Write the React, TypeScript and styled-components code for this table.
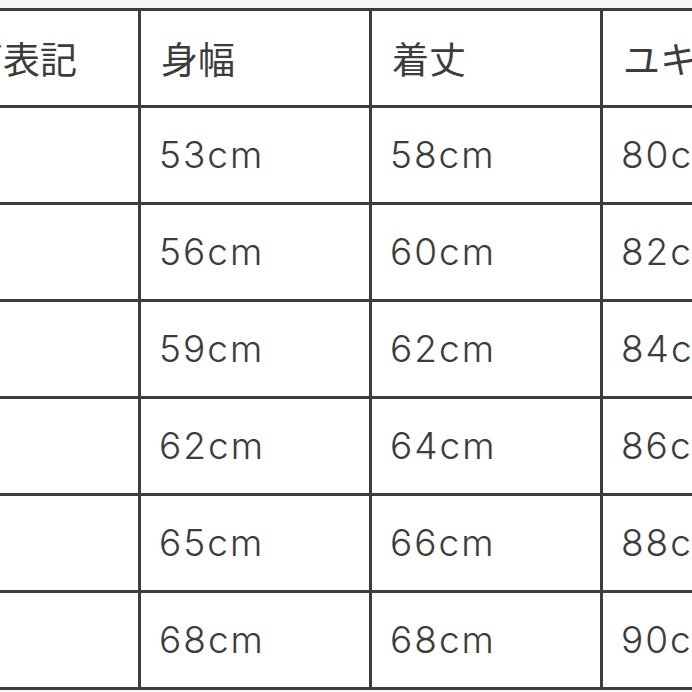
import styled, { createGlobalStyle } from 'styled-components'

const GlobalStyle = createGlobalStyle`
  html, body {
    margin: 0;
    padding: 0;
    width: 692px;
    height: 692px;
    overflow: hidden;
    background: #f6f6f6;
  }
`

const Table = styled.div`
  display: grid;
  grid-template-columns: 265px repeat(3, 228px);
  grid-auto-rows: 94px;
  gap: 3px;
  padding: 3px;
  width: max-content;
  margin: 8px 0 0 -130px;
  background: #3d3d3d;
  font-family: Inter, 'Noto Sans CJK JP', sans-serif;
  color: #3c3c3c;
`

const Cell = styled.div<{ $head?: boolean }>`
  display: flex;
  align-items: center;
  padding: ${p => (p.$head ? '0 0 0 20px' : '0 0 2px 18px')};
  background: #fff;
  white-space: nowrap;
  overflow: hidden;
  font-size: 37px;
  font-weight: ${p => (p.$head ? 400 : 300)};
  letter-spacing: ${p => (p.$head ? '0' : '2px')};
`

const header = ['サイズ表記', '身幅', '着丈', 'ユキ丈']

const rows = [
  ['S', '53cm', '58cm', '80cm'],
  ['M', '56cm', '60cm', '82cm'],
  ['L', '59cm', '62cm', '84cm'],
  ['XL', '62cm', '64cm', '86cm'],
  ['2XL', '65cm', '66cm', '88cm'],
  ['3XL', '68cm', '68cm', '90cm'],
]

export default function App() {
  return (
    <>
      <GlobalStyle />
      <Table>
        {header.map(h => (
          <Cell key={h} $head>
            {h}
          </Cell>
        ))}
        {rows.map(r =>
          r.map((v, i) => <Cell key={r[0] + i}>{v}</Cell>)
        )}
      </Table>
    </>
  )
}
